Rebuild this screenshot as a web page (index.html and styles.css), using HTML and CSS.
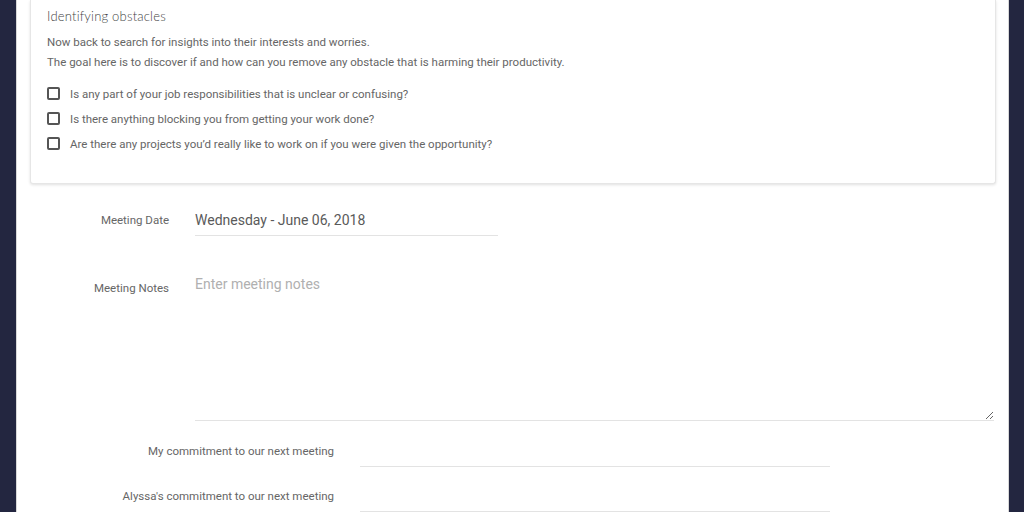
FILE: index.html
```html
<!DOCTYPE html>
<html>
<head>
<meta charset="utf-8">
<link rel="stylesheet" href="styles.css">
</head>
<body>
<div class="page">
  <div class="card">
    <div class="card-title">Identifying obstacles</div>
    <p class="desc">Now back to search for insights into their interests and worries.</p>
    <p class="desc">The goal here is to discover if and how can you remove any obstacle that is harming their productivity.</p>
    <ul class="checks">
      <li><span class="box"></span>Is any part of your job responsibilities that is unclear or confusing?</li>
      <li><span class="box"></span>Is there anything blocking you from getting your work done?</li>
      <li><span class="box"></span>Are there any projects you’d really like to work on if you were given the opportunity?</li>
    </ul>
  </div>
  <div class="form">
    <div class="row date-row">
      <label class="label">Meeting Date</label>
      <input class="field date" type="text" value="Wednesday - June 06, 2018">
    </div>
    <div class="row notes-row">
      <label class="label notes-label">Meeting Notes</label>
      <textarea class="notes" placeholder="Enter meeting notes"></textarea>
    </div>
    <div class="commit">
      <label class="label">My commitment to our next meeting</label>
      <input class="field" type="text">
    </div>
    <div class="commit">
      <label class="label">Alyssa's commitment to our next meeting</label>
      <input class="field" type="text">
    </div>
  </div>
</div>
</body>
</html>
```
FILE: styles.css
```css
html, body {
  margin: 0;
  padding: 0;
  height: 100%;
}
body {
  background: #232640;
  font-family: Roboto, "Liberation Sans", Arial, sans-serif;
  overflow: hidden;
}
.page {
  margin-left: 16px;
  width: 991px;
  min-height: 512px;
  background: #fff;
  border-right: 1px solid #d8d8d8;
  border-left: 1px solid #d8d8d8;
  padding-top: 0;
}
.card {
  margin: 0 12px 0 13px;
  padding: 6px 16px 27px 16px;
  background: #fff;
  border: 1px solid #e6e6e6;
  border-top: none;
  border-radius: 0 0 3px 3px;
  box-shadow: 0 1px 3px rgba(0,0,0,0.12);
}
.card-title {
  font-family: Lato, "Open Sans", sans-serif;
  font-weight: 300;
  font-size: 13px;
  line-height: 20px;
  color: #444;
  letter-spacing: 0.2px;
}
.desc {
  margin: 0;
  font-size: 11.5px;
  line-height: 20px;
  color: #666;
}
.card-title + .desc {
  margin-top: 6px;
}
.checks {
  list-style: none;
  margin: 9px 0 0;
  padding: 0;
}
.checks li {
  display: flex;
  align-items: center;
  height: 25px;
  font-size: 11.5px;
  color: #666;
}
.box {
  box-sizing: border-box;
  width: 13px;
  height: 13px;
  border: 2px solid #555;
  border-radius: 2px;
  margin-right: 10px;
  flex: none;
}
.form {
  padding-top: 22px;
}
.row {
  display: grid;
  grid-template-columns: 152px 1fr;
  column-gap: 26px;
  align-items: center;
}
.label {
  text-align: right;
  font-size: 11.5px;
  color: #666;
}
.date-row .label {
  position: relative;
  top: -1px;
}
.field {
  box-sizing: border-box;
  height: 30px;
  border: none;
  border-bottom: 1px solid #e3e3e3;
  outline: none;
  padding: 0 0 2px;
  font-family: Roboto, "Liberation Sans", sans-serif;
  font-size: 14px;
  color: #5a5a5a;
  background: transparent;
}
.date {
  width: 303px;
}
.notes-row {
  margin-top: 40px;
  align-items: start;
}
.notes-label {
  padding-top: 5px;
}
.notes {
  box-sizing: border-box;
  width: 799px;
  height: 145px;
  border: none;
  border-bottom: 1px solid #e3e3e3;
  outline: none;
  padding: 0;
  resize: vertical;
  font-family: Roboto, "Liberation Sans", sans-serif;
  font-size: 14px;
  color: #555;
}
.notes::placeholder {
  color: #b0b0b0;
}
.commit {
  display: grid;
  grid-template-columns: 317px 470px;
  column-gap: 26px;
  align-items: center;
  margin-top: 15px;
}
.notes-row + .commit {
  margin-top: 16px;
}
.commit .label {
  position: relative;
  top: -1px;
}
```
